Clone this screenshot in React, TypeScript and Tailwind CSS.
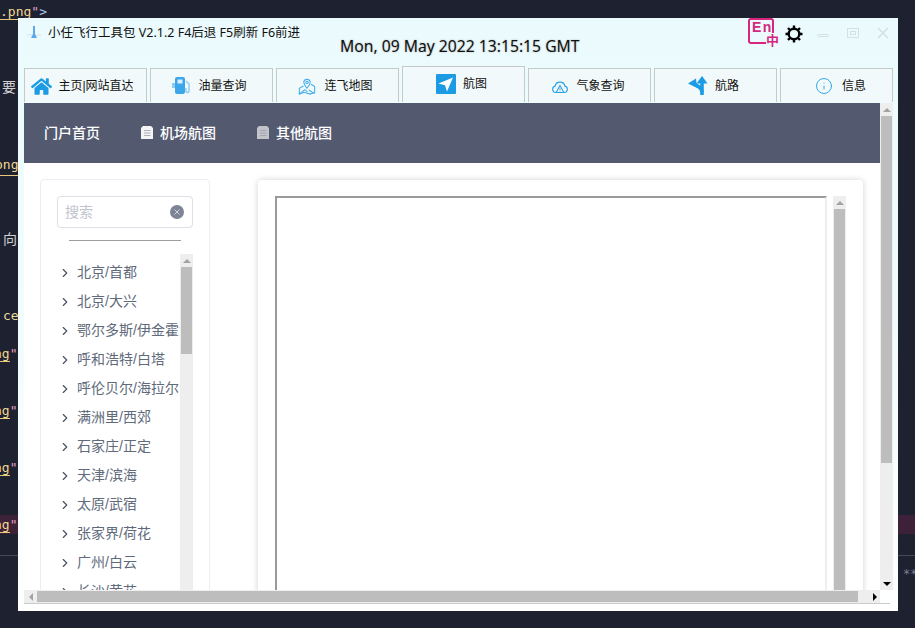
import React from 'react';
import { ChevronRight, Info } from 'lucide-react';
import { FaHome } from 'react-icons/fa';

const airports = [
  '北京/首都',
  '北京/大兴',
  '鄂尔多斯/伊金霍洛',
  '呼和浩特/白塔',
  '呼伦贝尔/海拉尔',
  '满洲里/西郊',
  '石家庄/正定',
  '天津/滨海',
  '太原/武宿',
  '张家界/荷花',
  '广州/白云',
  '长沙/黄花',
];

const FuelIcon = () => (
  <svg width="18" height="20" viewBox="0 0 18 20">
    <rect x="3" y="1" width="10" height="17" rx="2" fill="#3ba7ea" />
    <rect x="5.500" y="3.500" width="5" height="4" fill="#d9effb" />
    <rect x="0" y="7" width="3" height="5" fill="#8ccbf2" />
    <path d="M14 5l3 3v7a1.500 1.500 0 0 1-3 0v-3" fill="none" stroke="#8ccbf2" strokeWidth="1.400" />
  </svg>
);

const MapIcon = () => (
  <svg width="18" height="20" viewBox="0 0 20 20" fill="none" stroke="#45aeee" strokeWidth="1.200">
    <path d="M10 12.500c-2-2.600-3.500-4.400-3.500-6.400a3.500 3.500 0 0 1 7 0c0 2-1.500 3.800-3.500 6.400z" />
    <circle cx="10" cy="6" r="1.300" />
    <path d="M6 10l-4.500 2.500v6.500l5-2 7 2 5-2v-6.500l-4-2.500" />
    <path d="M1.500 19l6-5 3 2.500M12 14.500l6.500 4" />
  </svg>
);

const NavIcon = () => (
  <svg width="20" height="20" viewBox="0 0 20 20">
    <rect width="20" height="20" rx="1" fill="#1c9be4" />
    <path d="M17 3.500L2.500 9.500l6.500 1.800 2 6.200z" fill="#fff" />
  </svg>
);

const WeatherIcon = () => (
  <svg width="16" height="16" viewBox="0 0 16 16" fill="none" stroke="#2ba3ea" strokeWidth="1.200">
    <path d="M4.500 14.500h-.5a3.200 3.200 0 0 1-.9-6.300 5 5 0 0 1 9.800 0 3.200 3.200 0 0 1-.9 6.300h-.5" />
    <path d="M8 7.500l3.800 7H4.200z" fill="#fff" strokeWidth="1.100" />
    <path d="M8 10v2.300M8 12.900v.7" strokeWidth="0.900" />
  </svg>
);

const RouteIcon = () => (
  <svg width="20" height="20" viewBox="0 0 20 20">
    <path d="M14 0l5.500 7.500H8.500z" fill="#1c9be4" />
    <path d="M0 7.500L8 2.500l1 9.500z" fill="#1c9be4" />
    <path d="M14 6v13" stroke="#1c9be4" strokeWidth="3.600" fill="none" />
    <path d="M5 7c5 3 9 5 9 9" stroke="#1c9be4" strokeWidth="3.600" fill="none" />
  </svg>
);

const DocIcon = ({ className }: { className: string }) => (
  <svg width="12" height="13" viewBox="0 0 12 13" className={className}>
    <path d="M2 0h8l2 2v11H0V2z" fill="currentColor" />
    <path d="M3 4.500h6.500M3 7h6.500M3 9.500h6.500" stroke="#9ba0ae" strokeWidth="0.800" />
  </svg>
);

const GearIcon = () => (
  <svg width="18" height="18" viewBox="0 0 18 18" fill="none" stroke="#000">
    <circle cx="9" cy="9" r="5.300" strokeWidth="2.400" />
    <path d="M9 0.500v3M9 14.500v3M0.500 9h3M14.500 9h3M3 3l2 2M13 13l2 2M15 3l-2 2M5 13l-2 2" strokeWidth="2.400" />
  </svg>
);

const tabs = [
  { label: '主页|网站直达', icon: <FaHome className="h-[21px] w-[21px] text-[#1c9be4]" />, cls: 'gap-[6px] pr-[6px] w-[123px]' },
  { label: '油量查询', icon: <FuelIcon />, cls: 'gap-[8px] pr-[4px] w-[123px]' },
  { label: '连飞地图', icon: <MapIcon />, cls: 'gap-[8px] pr-[4px] w-[123px]' },
  { label: '航图', icon: <NavIcon />, cls: 'gap-[7px] pr-[4px] w-[123px]', active: true },
  { label: '气象查询', icon: <WeatherIcon />, cls: 'gap-[8px] pr-[2px] w-[123px]' },
  { label: '航路', icon: <RouteIcon />, cls: 'gap-[7px] pr-[4px] w-[123px]' },
  { label: '信息', icon: <Info className="h-[18px] w-[18px] text-[#2ba3ea]" strokeWidth={1.25} />, cls: 'gap-[9px] pl-[8px] w-[113px]' },
];

const VScrollbar = ({ thumbClass }: { thumbClass: string }) => (
  <div className="flex h-full w-[13px] shrink-0 flex-col bg-[#eeeeee]">
    <div className="flex h-[13px] shrink-0 items-center justify-center">
      <div className="h-0 w-0 border-x-[4px] border-b-[4px] border-x-transparent border-b-[#a3a3a3]" />
    </div>
    <div className={`mx-[1px] shrink-0 bg-[#bdbdbd] ${thumbClass}`} />
  </div>
);

export default function App() {
  return (
    <div className="relative h-[628px] w-[915px] overflow-hidden bg-[#1e2130] font-['Noto_Sans','Noto_Sans_CJK_SC',sans-serif]">
      {/* editor text behind the window */}
      <div className="absolute left-0 top-[2px] font-['DejaVu_Sans_Mono','Noto_Sans_CJK_SC',monospace] text-[13px] text-[#f0d890]">
        <span className="border-b border-[#e8c878]">.png</span>
        <span className="text-[#e0a0c0]">"</span>
        <span className="text-[#a8c8e8]">&gt;</span>
      </div>
      <div className="absolute left-[2px] top-[76px] text-[14px] text-[#d0d0d0]">要</div>
      <div className="absolute -left-[5px] top-[155px] border-b border-[#e8c878] font-['DejaVu_Sans_Mono',monospace] text-[13px] text-[#f0d890]">ong</div>
      <div className="absolute left-[3px] top-[228px] text-[14px] text-[#d0d0d0]">向</div>
      <div className="absolute left-[3px] top-[306px] font-['DejaVu_Sans_Mono',monospace] text-[13px] text-[#e8d8a0]">ce</div>
      <div className="absolute -left-[6px] top-[344px] font-['DejaVu_Sans_Mono',monospace] text-[13px] text-[#f0d890]"><span className="border-b border-[#e8c878]">ng</span><span className="text-[#e0a0c0]">"</span></div>
      <div className="absolute -left-[6px] top-[401px] font-['DejaVu_Sans_Mono',monospace] text-[13px] text-[#f0d890]"><span className="border-b border-[#e8c878]">ng</span><span className="text-[#e0a0c0]">"</span></div>
      <div className="absolute -left-[6px] top-[458px] font-['DejaVu_Sans_Mono',monospace] text-[13px] text-[#f0d890]"><span className="border-b border-[#e8c878]">ng</span><span className="text-[#e0a0c0]">"</span></div>
      <div className="absolute left-0 top-[515px] h-[19px] w-full bg-[#3d2138]" />
      <div className="absolute -left-[6px] top-[515px] font-['DejaVu_Sans_Mono',monospace] text-[13px] text-[#f0d890]"><span className="border-b border-[#e8c878]">ng</span><span className="text-[#e0a0c0]">"</span></div>
      <div className="absolute left-0 top-[555px] h-px w-full bg-[#45485a]" />
      <div className="absolute left-[903px] top-[565px] font-['DejaVu_Sans_Mono',monospace] text-[12px] text-[#7a7f90]">**</div>

      {/* app window */}
      <div className="relative ml-[18px] mt-[18px] h-[593px] w-[880px] bg-linear-to-b from-[#ebfbfd] via-[#f0fcfd] to-white">
        <div className="flex h-[48px] items-start">
          <div className="flex w-[322px] items-center pl-[9px] pt-[6px]">
            <svg width="14" height="16" viewBox="0 0 14 16" className="shrink-0">
              <path d="M0 10h14" stroke="#dbe9f2" strokeWidth="1.500" />
              <path d="M6 1h2v8l2 4H4l2-4z" fill="#5aa9e8" />
            </svg>
            <span className="ml-[7px] whitespace-nowrap text-[12.500px] leading-[17px] text-[#111111]">小任飞行工具包 V2.1.2 F4后退 F5刷新 F6前进</span>
          </div>
          <div className="mt-[18px] whitespace-nowrap text-[15.700px] leading-[20px] text-[#111111] [text-shadow:0_0_2px_#aaa]">Mon, 09 May 2022 13:15:15 GMT</div>
          <div className="ml-auto flex items-start pr-[9px]">
            <div className="relative h-[26px] w-[26px] rounded-[3px] border-2 border-[#d6267f]">
              <span className="absolute left-[2px] top-[1px] font-['Liberation_Sans',sans-serif] text-[14px] font-bold leading-[12px] tracking-[1.500px] text-[#d6267f]">En</span>
              <span className="absolute -bottom-[5px] -right-[7px] bg-[#ebfbfd] text-[13px] font-bold leading-[14px] text-[#d6267f]">中</span>
            </div>
            <div className="ml-[11px] mt-[7px]"><GearIcon /></div>
            <div className="ml-[14px] mt-[16px] h-[3px] w-[12px] rounded-full border border-[#d5e0e2]" />
            <div className="ml-[18px] mt-[10px] flex h-[10px] w-[12px] items-center justify-center border border-[#d5e0e2]">
              <div className="h-[4px] w-[6px] border border-[#d5e0e2]" />
            </div>
            <svg width="12" height="12" viewBox="0 0 12 12" className="ml-[18px] mt-[9px]">
              <path d="M1 1l10 10M11 1L1 11" stroke="#d5e0e2" strokeWidth="1.600" />
            </svg>
          </div>
        </div>

        <div className="flex h-[36px] items-end gap-[3px] pl-[6px] font-['Liberation_Sans','Noto_Sans_CJK_SC',sans-serif]">
          {tabs.map((t) => (
            <div
              key={t.label}
              className={`flex items-center justify-center border border-b-0 border-[#c6c9ca] bg-[#f1f9fa] text-[12px] text-[#111111] ${t.cls} ${t.active ? 'h-[36px] bg-[#eef9fb] pb-[1px]' : 'h-[34px] pt-[1px]'}`}
            >
              {t.icon}
              <span className="whitespace-nowrap">{t.label}</span>
            </div>
          ))}
        </div>

        <div className="ml-[6px] mt-px flex h-[487px] w-[869px]">
          <div className="w-[856px] overflow-hidden bg-white">
            <div className="flex h-[60px] items-center bg-[#535a70] pb-[1px] pl-[20px] text-[14px] font-medium text-white">
              <span>门户首页</span>
              <DocIcon className="ml-[41px] text-[#f4f4f4]" />
              <span className="ml-[7px]">机场航图</span>
              <DocIcon className="ml-[41px] text-[#c2c4ca]" />
              <span className="ml-[7px]">其他航图</span>
            </div>
            <div className="flex h-[427px] items-start">
              <div className="ml-[16px] mt-[16px] h-[500px] w-[170px] shrink-0 rounded-[4px] border border-[#ebeef5] px-[16px] pt-[16px]">
                <div className="flex h-[32px] w-[136px] items-center justify-between rounded-[4px] border border-[#dcdfe6] pl-[7px] pr-[8px]">
                  <span className="pb-[1px] text-[14px] text-[#c0c4cc]">搜索</span>
                  <div className="flex h-[14px] w-[14px] items-center justify-center rounded-full bg-[#7e8496]">
                    <svg width="8" height="8" viewBox="0 0 8 8">
                      <path d="M1.500 1.500l5 5M6.500 1.500l-5 5" stroke="#e4e6ea" strokeWidth="0.800" />
                    </svg>
                  </div>
                </div>
                <div className="ml-[12px] mt-[12px] h-[1px] w-[112px] bg-[#9d9d9d]" />
                <div className="mt-[13px] flex h-[340px] w-[136px]">
                  <div className="w-[123px] shrink-0 overflow-hidden pt-[4px] font-['Liberation_Sans','Noto_Sans_CJK_SC',sans-serif]">
                    {airports.map((a) => (
                      <div key={a} className="flex h-[29px] items-center whitespace-nowrap text-[14px] text-[#606a7b]">
                        <ChevronRight className="ml-px h-[14px] w-[14px] shrink-0 text-[#4b5265]" strokeWidth={2} />
                        <span className="ml-[5px]">{a}</span>
                      </div>
                    ))}
                  </div>
                  <VScrollbar thumbClass="h-[87px]" />
                </div>
              </div>

              <div className="ml-[48px] mt-[17px] h-[500px] w-[605px] shrink-0 rounded-[4px] bg-white px-[17px] pt-[16px] shadow-[0_0_6px_rgba(0,0,0,0.18)]">
                <div className="flex h-[480px]">
                  <div className="h-full w-[553px] border-l-2 border-r-2 border-t-2 border-l-[#9a9a9a] border-r-[#eeeeee] border-t-[#9a9a9a] bg-white" />
                  <div className="ml-[6px]">
                    <VScrollbar thumbClass="h-[440px]" />
                  </div>
                </div>
              </div>
            </div>
          </div>

          <div className="flex w-[13px] shrink-0 flex-col bg-[#eeeeee]">
            <div className="flex h-[13px] shrink-0 items-center justify-center">
              <div className="h-0 w-0 border-x-[4px] border-b-[4px] border-x-transparent border-b-[#a3a3a3]" />
            </div>
            <div className="mx-[1px] h-[347px] shrink-0 bg-[#bdbdbd]" />
            <div className="mt-auto flex h-[13px] shrink-0 items-center justify-center">
              <div className="h-0 w-0 border-x-[4px] border-t-[4px] border-x-transparent border-t-black" />
            </div>
          </div>
        </div>

        {/* bottom scrollbar */}
        <div className="ml-[6px] flex h-[13px] w-[869px] items-center">
          <div className="flex h-[13px] w-[13px] shrink-0 items-center justify-center bg-[#eeeeee]">
            <div className="h-0 w-0 border-y-[4px] border-r-[4px] border-y-transparent border-r-[#a3a3a3]" />
          </div>
          <div className="flex h-[13px] w-[843px] items-center bg-[#eeeeee]">
            <div className="h-[11px] w-[821px] bg-[#bdbdbd]" />
            <div className="ml-auto mr-[3px] h-0 w-0 border-y-[4px] border-l-[4px] border-y-transparent border-l-black" />
          </div>
        </div>
        <div className="ml-[6px] h-px w-[866px] bg-[#c8cccc]" />
      </div>
    </div>
  );
}
